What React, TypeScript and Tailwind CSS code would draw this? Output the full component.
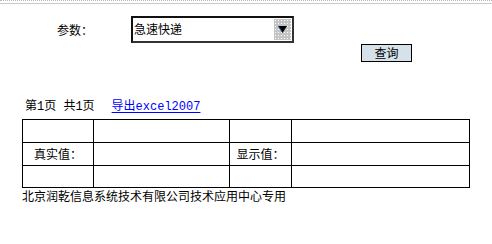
import React from "react";

const cjk = { fontFamily: '"Noto Sans CJK SC", "Liberation Sans", sans-serif' };
const mixed = { fontFamily: '"Liberation Mono", "Noto Sans CJK SC", monospace' };

export default function App() {
  return (
    <div className="w-[492px] h-[244px] bg-white text-black text-[12px] leading-[16px]" style={cjk}>
      <div className="h-px border-t border-dotted border-[#b8b8b8]" />
      <div className="h-px mt-[2px] bg-[#c8c8c8]" />

      <div className="flex items-center mt-[12px] h-[27px]">
        <div className="ml-[57px] w-[74px]">参数：</div>
        <div className="flex w-[163px] h-[27px] border-2 border-t-[#111] border-l-[#111] border-r-[#333] border-b-[#333] bg-white">
          <div className="flex-1 flex items-center pl-[1px] pb-[2px]">急速快递</div>
          <div className="w-[17px] my-[1px] mr-[1px] flex items-center justify-center bg-[#c4c4c4] bg-[radial-gradient(#ffffff_0.8px,transparent_0.8px)] bg-[length:3px_3px]">
            <svg width="9" height="7" viewBox="0 0 9 7">
              <polygon points="0,0 9,0 4.5,7" fill="#000" />
              <line x1="0.5" y1="0.5" x2="4.5" y2="6.5" stroke="#3a6ea5" strokeWidth="0.8" />
            </svg>
          </div>
        </div>
      </div>

      <div className="flex mt-[1px]">
        <button
          className="ml-[361px] w-[51px] h-[18px] border border-black bg-[#d6e2ea] flex items-center justify-center text-[12px] leading-[16px]"
          style={cjk}
        >
          查询
        </button>
      </div>

      <div className="flex items-end mt-[37px] h-[16px]" style={mixed}>
        <span className="ml-[25px]">第1页 共1页</span>
        <a className="ml-[17px] text-[#0000ff] underline underline-offset-2" href="#">
          导出excel2007
        </a>
      </div>

      <div className="mt-[4px] ml-[22px] w-[448px] border-l border-t border-black grid grid-cols-[71px_136px_62px_178px] grid-rows-[23px_23px_22px]">
        <div className="border-r border-b border-black" />
        <div className="border-r border-b border-black" />
        <div className="border-r border-b border-black" />
        <div className="border-r border-b border-black" />
        <div className="border-r border-b border-black flex items-center justify-center">真实值：</div>
        <div className="border-r border-b border-black" />
        <div className="border-r border-b border-black flex items-center justify-center">显示值：</div>
        <div className="border-r border-b border-black" />
        <div className="border-r border-b border-black" />
        <div className="border-r border-b border-black" />
        <div className="border-r border-b border-black" />
        <div className="border-r border-b border-black" />
      </div>

      <div className="ml-[22px] h-[16px]">北京润乾信息系统技术有限公司技术应用中心专用</div>
    </div>
  );
}
